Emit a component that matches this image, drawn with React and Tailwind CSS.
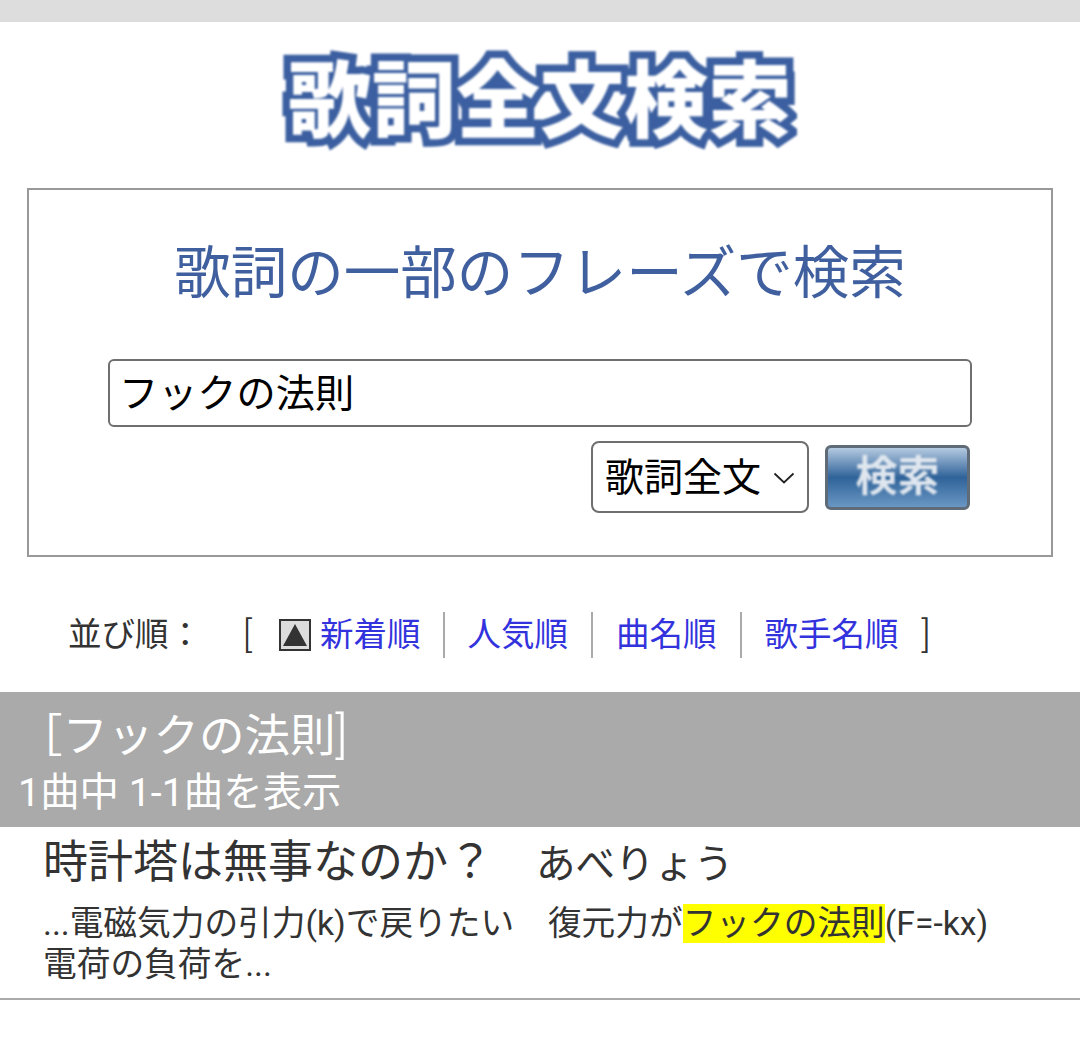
import React from "react";

const SortLink = ({ label, last }) => (
  <a className={`px-[23px] h-[46px] flex items-center text-[#3333dd] ${last ? "" : "border-r-2 border-[#aaaaaa]"}`}>
    {label}
  </a>
);

const Logo = () => (
  <div className="flex justify-center h-[166px] pt-[31px]">
    <div className="h-[100px] w-[516px] flex items-center justify-center text-[84px] leading-[100px] font-black text-white whitespace-nowrap blur-[0.8px] [-webkit-text-stroke:15px_#3b5fa0] [paint-order:stroke_fill]">
      歌詞全文検索
    </div>
  </div>
);

const SearchBox = () => (
  <div className="mx-[27px] h-[369px] border-2 border-[#999999] pt-[48px] px-[79px]">
    <h1 className="text-center text-[56.5px] leading-[72px] text-[#3f5f9f] whitespace-nowrap">
      歌詞の一部のフレーズで検索
    </h1>
    <div className="mt-[49px] h-[68px] border-2 border-[#6f6f6f] rounded-[6px] px-[9px] pt-[2px] flex items-center text-[39.2px] text-black">
      フックの法則
    </div>
    <div className="mt-[14px] flex justify-end items-center pr-[2px]">
      <div className="w-[218px] h-[72px] border-2 border-[#6f6f6f] rounded-[8px] pl-[12px] pt-[2px] flex items-center text-[39px] text-black">
        歌詞全文
        <svg className="ml-[12px]" width="22" height="12" viewBox="0 0 22 12" fill="none">
          <path d="M1.5 1.5 L11 10.5 L20.5 1.5" stroke="#222" strokeWidth="1.8" />
        </svg>
      </div>
      <button className="ml-[16px] w-[145px] h-[65px] rounded-[6px] border-[3px] border-[#5f6b76] bg-gradient-to-b from-[#b4cae0] via-[#2f6399] to-[#6a97c4] flex items-center justify-center">
        <span className="text-[42px] leading-none font-bold text-[#dfe6ee] blur-[0.8px]">検索</span>
      </button>
    </div>
  </div>
);

const SortRow = () => (
  <div className="mt-[55px] h-[46px] flex items-center text-[33.5px] text-[#333333] whitespace-nowrap">
    <span className="ml-[68px] w-[175px]">並び順：</span>
    <span className="w-[36px] text-[37px] font-light">[</span>
    <span className="w-[32px] h-[32px] border-2 border-[#333333] bg-[#dddddd] flex items-center justify-center mr-[9px]">
      <svg width="24" height="22" viewBox="0 0 24 22">
        <path d="M12 0 L24 22 L0 22 Z" fill="#333333" />
      </svg>
    </span>
    <a className="pr-[22px] h-[46px] flex items-center text-[#3333dd] border-r-2 border-[#aaaaaa]">新着順</a>
    <SortLink label="人気順" />
    <SortLink label="曲名順" />
    <SortLink label="歌手名順" last />
    <span className="text-[37px] font-light">]</span>
  </div>
);

export default function App() {
  return (
    <div className="font-['Roboto','Noto_Sans_CJK_JP',sans-serif] w-[1080px] h-[1044px] bg-white overflow-hidden">
      <div className="h-[22px] bg-[#dddddd]" />
      <Logo />
      <SearchBox />
      <SortRow />
      <div className="mt-[34px] h-[135px] bg-[#aaaaaa] text-white">
        <div className="pl-[17px] pt-[17px] text-[45.5px] leading-[56px] whitespace-nowrap">
          ［フックの法則<span className="text-[50px] leading-none font-light">]</span>
        </div>
        <div className="pl-[18px] mt-[5px] text-[39.4px] leading-[46px]">1曲中 1-1曲を表示</div>
      </div>
      <div className="pl-[43px] border-b-2 border-[#aaaaaa] h-[173px] text-[#333333]">
        <div className="flex items-baseline h-[70px] pt-[4px] whitespace-nowrap">
          <span className="text-[45px] leading-[64px]">時計塔は無事なのか？</span>
          <span className="ml-[43px] text-[39.5px]">あべりょう</span>
        </div>
        <p className="text-[33.7px] leading-[41px] mt-[6px]">
          ...電磁気力の引力(k)で戻りたい　復元力が<span className="bg-[#ffff00]">フックの法則</span>(F=-kx)
          <br />
          電荷の負荷を...
        </p>
      </div>
    </div>
  );
}
